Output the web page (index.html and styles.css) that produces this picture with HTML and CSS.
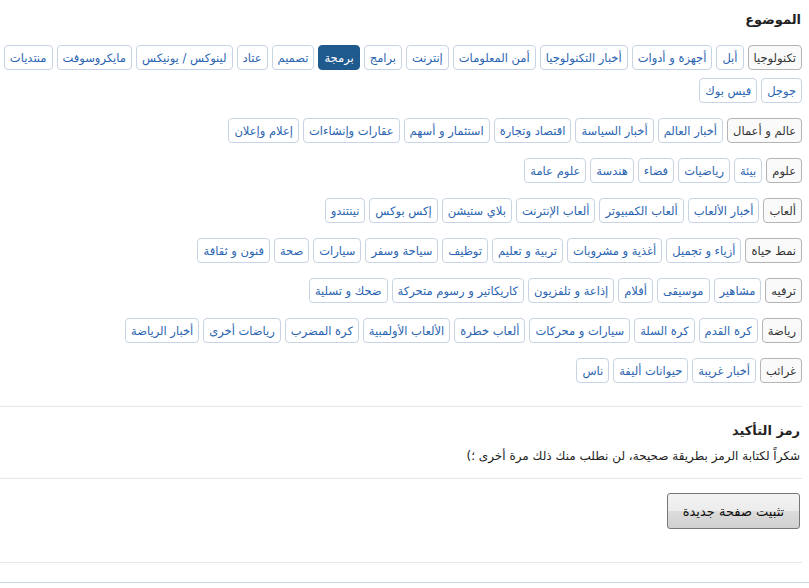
FILE: index.html
```html
<!DOCTYPE html>
<html lang="ar" dir="rtl">
<head>
<meta charset="utf-8">
<title>الموضوع</title>
<link rel="stylesheet" href="styles.css">
</head>
<body>
<div class="page">
  <div class="topic">
    <h3 class="title">الموضوع</h3>
    <div class="group">
      <span class="tag head">تكنولوجيا</span>
      <span class="tag">أبل</span>
      <span class="tag">أجهزة و أدوات</span>
      <span class="tag">أخبار التكنولوجيا</span>
      <span class="tag">أمن المعلومات</span>
      <span class="tag">إنترنت</span>
      <span class="tag">برامج</span>
      <span class="tag selected">برمجة</span>
      <span class="tag">تصميم</span>
      <span class="tag">عتاد</span>
      <span class="tag">لينوكس / يونيكس</span>
      <span class="tag">مايكروسوفت</span>
      <span class="tag">منتديات</span>
      <span class="tag">جوجل</span>
      <span class="tag">فيس بوك</span>
    </div>
    <div class="group">
      <span class="tag head">عالم و أعمال</span>
      <span class="tag">أخبار العالم</span>
      <span class="tag">أخبار السياسة</span>
      <span class="tag">اقتصاد وتجارة</span>
      <span class="tag">استثمار و أسهم</span>
      <span class="tag">عقارات وإنشاءات</span>
      <span class="tag">إعلام وإعلان</span>
    </div>
    <div class="group">
      <span class="tag head">علوم</span>
      <span class="tag">بيئة</span>
      <span class="tag">رياضيات</span>
      <span class="tag">فضاء</span>
      <span class="tag">هندسة</span>
      <span class="tag">علوم عامة</span>
    </div>
    <div class="group">
      <span class="tag head">ألعاب</span>
      <span class="tag">أخبار الألعاب</span>
      <span class="tag">ألعاب الكمبيوتر</span>
      <span class="tag">ألعاب الإنترنت</span>
      <span class="tag">بلاي ستيشن</span>
      <span class="tag">إكس بوكس</span>
      <span class="tag">نينتندو</span>
    </div>
    <div class="group">
      <span class="tag head">نمط حياة</span>
      <span class="tag">أزياء و تجميل</span>
      <span class="tag">أغذية و مشروبات</span>
      <span class="tag">تربية و تعليم</span>
      <span class="tag">توظيف</span>
      <span class="tag">سياحة وسفر</span>
      <span class="tag">سيارات</span>
      <span class="tag">صحة</span>
      <span class="tag">فنون و ثقافة</span>
    </div>
    <div class="group">
      <span class="tag head">ترفيه</span>
      <span class="tag">مشاهير</span>
      <span class="tag">موسيقى</span>
      <span class="tag">أفلام</span>
      <span class="tag">إذاعة و تلفزيون</span>
      <span class="tag">كاريكاتير و رسوم متحركة</span>
      <span class="tag">ضحك و تسلية</span>
    </div>
    <div class="group">
      <span class="tag head">رياضة</span>
      <span class="tag">كرة القدم</span>
      <span class="tag">كرة السلة</span>
      <span class="tag">سيارات و محركات</span>
      <span class="tag">ألعاب خطرة</span>
      <span class="tag">الألعاب الأولمبية</span>
      <span class="tag">كرة المضرب</span>
      <span class="tag">رياضات أخرى</span>
      <span class="tag">أخبار الرياضة</span>
    </div>
    <div class="group">
      <span class="tag head">غرائب</span>
      <span class="tag">أخبار غريبة</span>
      <span class="tag">حيوانات أليفة</span>
      <span class="tag">ناس</span>
    </div>
  </div>
  <div class="captcha">
    <h3 class="title">رمز التأكيد</h3>
    <p class="note">شكراً لكتابة الرمز بطريقة صحيحة، لن نطلب منك ذلك مرة أخرى ؛)</p>
  </div>
  <div class="actions">
    <button class="submit" type="button">تثبيت صفحة جديدة</button>
  </div>
  <div class="spacer"></div>
</div>
<div class="footer-line"></div>
</body>
</html>
```
FILE: styles.css
```css
html, body {
  margin: 0;
  padding: 0;
  background: #ffffff;
}
body {
  font-family: "DejaVu Sans", sans-serif;
  font-size: 12px;
  color: #222;
}
.page {
  margin-right: 7px;
}
.title {
  margin: 0;
  font-size: 13px;
  font-weight: bold;
  color: #222;
  line-height: 16px;
}
.topic {
  padding: 12px 0 8px;
  border-bottom: 1px solid #e6e6e6;
}
.topic .title {
  margin-bottom: 17px;
  padding-right: 1px;
}
.group {
  display: flex;
  flex-wrap: wrap;
  row-gap: 8px;
  column-gap: 4px;
  margin-bottom: 15px;
}
.tag {
  display: inline-flex;
  align-items: center;
  height: 25px;
  box-sizing: border-box;
  padding: 0 5px;
  border: 1px solid #c8d4e3;
  border-radius: 4px;
  color: #2a64b0;
  background: #fff;
  font-size: 11.5px;
  white-space: nowrap;
}
.tag.head {
  border-color: #b4b4b4;
  color: #333;
  background: #fafafa;
}
.tag.selected {
  background: #1f5a8f;
  border-color: #1f5a8f;
  color: #fff;
}
.captcha {
  padding: 16px 2px 14px 0;
  border-bottom: 1px solid #e6e6e6;
}
.captcha .title {
  margin-bottom: 9px;
}
.note {
  margin: 0;
  font-size: 12px;
  line-height: 16px;
  color: #222;
}
.actions {
  padding: 14px 2px 33px 0;
  border-bottom: 1px solid #e8e8e8;
}
.submit {
  width: 133px;
  height: 36px;
  border: 1px solid #777;
  border-radius: 3px;
  background: linear-gradient(#f3f3f3 0%, #ececec 50%, #dcdcdc 51%, #d0d0d0 100%);
  font-family: "DejaVu Sans", sans-serif;
  font-size: 13px;
  color: #111;
  padding: 0;
}
.spacer {
  height: 19px;
}
.footer-line {
  height: 1px;
  background: #c9d6ea;
}
```
